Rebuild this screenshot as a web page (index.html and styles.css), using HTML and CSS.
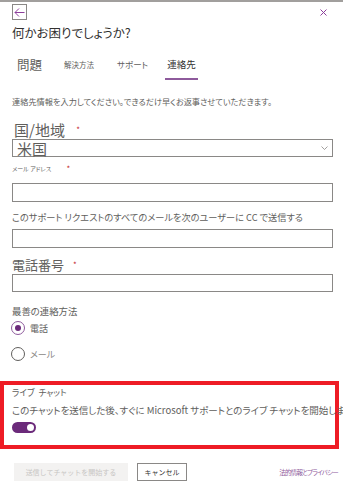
FILE: index.html
```html
<!DOCTYPE html>
<html lang="ja">
<head>
    <meta charset="UTF-8" />
    <meta name="viewport" content="width=device-width, initial-scale=1" />
    <title>何かお困りでしょうか?</title>
    <link rel="stylesheet" href="styles.css">
</head>
<body>
<div class="page">
    <div class="topbar">
        <button class="back" aria-label="戻る">
            <svg width="11" height="9" viewBox="0 0 11 9"><path d="M5 0.5 L1 4.5 L5 8.5 M1 4.5 H10.5" fill="none" stroke="#8c3f9b" stroke-width="1"/></svg>
        </button>
        <button class="close" aria-label="閉じる">
            <svg width="7" height="7" viewBox="0 0 7 7"><path d="M0.5 0.5 L6.5 6.5 M6.5 0.5 L0.5 6.5" fill="none" stroke="#8c3f9b" stroke-width="1"/></svg>
        </button>
    </div>

    <h1 class="title">何かお困りでしょうか?</h1>

    <nav class="tabs">
        <span class="tab tab-issue">問題</span>
        <span class="tab tab-solve">解決方法</span>
        <span class="tab tab-support">サポート</span>
        <span class="tab tab-contact active">連絡先</span>
    </nav>

    <p class="intro">連絡先情報を入力してください。できるだけ早くお返事させていただきます。</p>

    <label class="lbl lbl-country">国/地域 <span class="req">*</span></label>
    <div class="select">
        <span>米国</span>
        <svg width="7" height="4" viewBox="0 0 7 4"><path d="M0.5 0.5 L3.5 3.5 L6.5 0.5" fill="none" stroke="#8a8886" stroke-width="0.8"/></svg>
    </div>

    <label class="lbl lbl-email">メール アドレス <span class="req">*</span></label>
    <input class="box box-email" type="text" />

    <label class="lbl lbl-cc">このサポート リクエストのすべてのメールを次のユーザーに CC で送信する</label>
    <input class="box box-cc" type="text" />

    <label class="lbl lbl-phone">電話番号 <span class="req">*</span></label>
    <input class="box box-phone" type="text" />

    <div class="lbl lbl-method">最善の連絡方法</div>
    <div class="radio radio-phone"><span class="dot checked"></span><span>電話</span></div>
    <div class="radio radio-mail"><span class="dot"></span><span>メール</span></div>

    <section class="chat">
        <div class="chat-title">ライブ チャット</div>
        <div class="chat-text">このチャットを送信した後、すぐに Microsoft サポートとのライブ チャットを開始します</div>
        <span class="toggle"><span class="knob"></span></span>
    </section>

    <div class="actions">
        <button class="btn btn-send" disabled>送信してチャットを開始する</button>
        <button class="btn btn-cancel">キャンセル</button>
        <a class="legal" href="#">法的情報とプライバシー</a>
    </div>
</div>
</body>
</html>
```

FILE: styles.css
```css
* {
  box-sizing: border-box;
}
body {
  margin: 0;
  font-family: "Noto Sans CJK JP", "Noto Sans", sans-serif;
  font-feature-settings: "palt";
  background: #ffffff;
  color: #605e5c;
  border-top: 2px solid #a19f9d;
  overflow: hidden;
}
.page {
  padding: 0 10px 0 12px;
}
.topbar {
  display: flex;
  justify-content: space-between;
  align-items: center;
  padding-top: 2px;
}
.back {
  width: 15px;
  height: 16px;
  padding: 0;
  border: 1px solid #8a8886;
  background: #fff;
  display: flex;
  align-items: center;
  justify-content: center;
}
.close {
  border: none;
  background: none;
  padding: 0;
  margin-right: 6px;
  display: flex;
}
.title {
  margin: 4px 0 0;
  font-size: 12.5px;
  line-height: 18px;
  font-weight: 400;
  color: #323130;
}
.tabs {
  display: flex;
  align-items: center;
  margin-top: 8px;
  height: 30px;
}
.tab {
  height: 30px;
  display: flex;
  align-items: center;
  border-bottom: 2px solid transparent;
  color: #605e5c;
}
.tab-issue {
  font-size: 12.5px;
  margin-left: 5px;
}
.tab-solve {
  font-size: 7.5px;
  margin-left: 22px;
}
.tab-support {
  font-size: 8.5px;
  margin-left: 23px;
}
.tab-contact {
  font-size: 9.5px;
  margin-left: 17px;
  padding: 0 2px;
}
.tab.active {
  border-bottom-color: #8e5a9c;
  color: #323130;
}
.intro {
  margin: 14px 0 0;
  font-size: 8.2px;
  line-height: 14px;
}
.lbl {
  display: block;
  white-space: nowrap;
}
.req {
  color: #c4262e;
  font-size: 8px;
  margin-left: 6px;
  vertical-align: top;
}
.lbl-country {
  margin-top: 14px;
  font-size: 15px;
  line-height: 16px;
  padding-left: 2px;
}
.lbl-country .req {
  margin-left: 8px;
}
.select {
  margin-top: 1px;
  height: 18px;
  border: 1px solid #8a8886;
  display: flex;
  align-items: flex-end;
  justify-content: space-between;
  padding: 0 4px 0 4px;
  font-size: 15px;
  line-height: 15px;
  color: #605e5c;
}
.select svg {
  align-self: center;
}
.lbl-email {
  margin-top: 7px;
  font-size: 6px;
  line-height: 10px;
}
.lbl-email .req {
  margin-left: 14px;
}
.box {
  display: block;
  width: 100%;
  border: 1px solid #8a8886;
  background: #fff;
  padding: 0;
  margin: 0;
  outline: none;
}
.box-email {
  margin-top: 9px;
  height: 19px;
}
.lbl-cc {
  margin-top: 9px;
  font-size: 9.2px;
  line-height: 12px;
}
.box-cc {
  margin-top: 6px;
  height: 19px;
}
.lbl-phone {
  margin-top: 9px;
  font-size: 13px;
  line-height: 16px;
}
.box-phone {
  margin-top: 1px;
  height: 18px;
}
.lbl-method {
  margin-top: 13px;
  font-size: 9.4px;
  line-height: 12px;
}
.radio {
  display: flex;
  align-items: center;
  gap: 5px;
  height: 14px;
  font-size: 9px;
}
.radio-phone {
  margin-top: 4px;
}
.radio-mail {
  margin-top: 12px;
  color: #8a8886;
}
.dot {
  width: 14px;
  height: 14px;
  border-radius: 50%;
  border: 1px solid #605e5c;
  display: flex;
  align-items: center;
  justify-content: center;
  margin-left: -1px;
}
.dot.checked {
  border: 1.5px solid #8e5a9c;
}
.dot.checked::after {
  content: "";
  width: 6px;
  height: 6px;
  border-radius: 50%;
  background: #6b2a7a;
}
.chat {
  margin: 20px -6px 0 -12px;
  border: 4px solid #ee1c25;
  padding: 2px 0 12px 8px;
}
.chat-title {
  font-size: 8.6px;
  line-height: 11px;
  word-spacing: 2px;
}
.chat-text {
  margin-top: 6px;
  font-size: 9.5px;
  line-height: 12px;
  white-space: nowrap;
}
.toggle {
  display: flex;
  align-items: center;
  justify-content: flex-end;
  margin-top: 6px;
  width: 24px;
  height: 11px;
  border-radius: 6px;
  background: #6b2a7a;
  padding-right: 2px;
}
.knob {
  width: 7px;
  height: 7px;
  border-radius: 50%;
  background: #fff;
}
.actions {
  display: flex;
  align-items: center;
  margin-top: 14px;
  padding-left: 2px;
}
.btn {
  height: 18px;
  font-family: inherit;
  font-size: 7px;
  padding: 0;
}
.btn-send {
  width: 114px;
  background: #f3f2f1;
  border: none;
  color: #c8c6c4;
}
.btn-cancel {
  width: 50px;
  margin-left: 9px;
  background: #fff;
  border: 1px solid #8a8886;
  color: #323130;
}
.legal {
  margin-left: auto;
  margin-right: -5px;
  font-size: 6.5px;
  letter-spacing: -0.8px;
  color: #8e5a9c;
  text-decoration: none;
}
```
